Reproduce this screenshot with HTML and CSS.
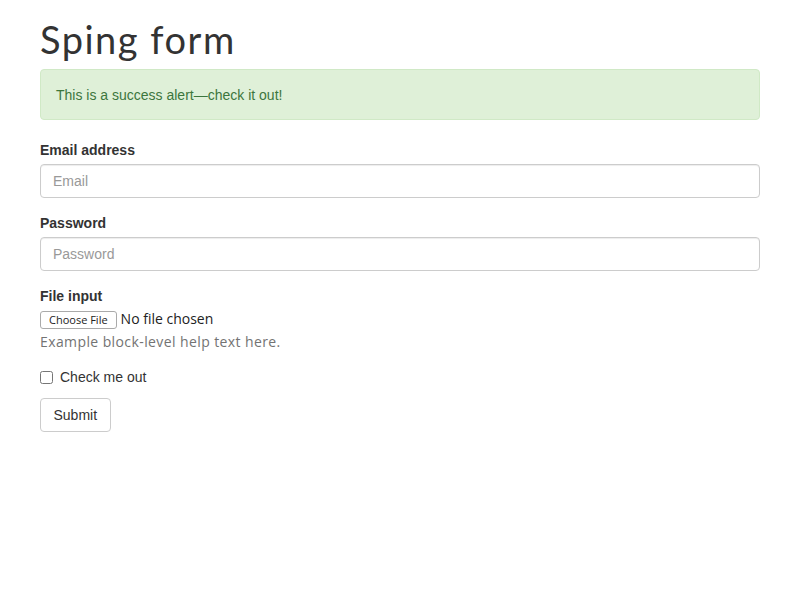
FILE: index.html
```html
<!DOCTYPE html>
<html lang="en">
<head>
<meta charset="utf-8">
<title>Sping form</title>
<link rel="stylesheet" href="styles.css">
</head>
<body>
<div class="container">
  <h1 class="title">Sping form</h1>
  <div class="alert">This is a success alert—check it out!</div>
  <form class="form">
    <div class="group">
      <label class="label" for="email">Email address</label>
      <input class="control" id="email" type="email" placeholder="Email">
    </div>
    <div class="group">
      <label class="label" for="pw">Password</label>
      <input class="control" id="pw" type="password" placeholder="Password">
    </div>
    <div class="group">
      <label class="label" for="file">File input</label>
      <input class="file" id="file" type="file">
      <p class="help">Example block-level help text here.</p>
    </div>
    <label class="check"><input class="box" type="checkbox"> Check me out</label>
    <button class="btn" type="button">Submit</button>
  </form>
</div>
</body>
</html>
```
FILE: styles.css
```css
* { box-sizing: border-box; }
body {
  margin: 0;
  font-family: "Liberation Sans", Arial, sans-serif;
  font-size: 14px;
  color: #333;
  background: #fff;
}
.container {
  width: 720px;
  margin: 0 auto;
}
.title {
  font-family: Lato, "Open Sans", sans-serif;
  font-weight: 400;
  font-size: 38px;
  letter-spacing: 1.5px;
  line-height: 40px;
  margin: 19px 0 10px;
  color: #333;
}
.alert {
  background: #dff0d8;
  border: 1px solid #d0e9c6;
  border-radius: 4px;
  color: #3c763d;
  padding: 15px;
  line-height: 20px;
  height: 51px;
  margin-bottom: 20px;
}
.form { display: flex; flex-direction: column; }
.group {
  display: flex;
  flex-direction: column;
  margin-bottom: 15px;
}
.label {
  font-weight: 700;
  line-height: 20px;
  margin-bottom: 4px;
}
.control {
  height: 34px;
  width: 100%;
  padding: 6px 12px;
  border: 1px solid #ccc;
  border-radius: 4px;
  font-family: "Liberation Sans", Arial, sans-serif;
  font-size: 14px;
  color: #555;
  box-shadow: inset 0 1px 1px rgba(0,0,0,.075);
}
.control::placeholder { color: #999; }
.file {
  font-family: "Open Sans", sans-serif;
  font-size: 14px;
  color: #222;
  height: 20px;
  padding: 0;
  margin: -1px 0 1px;
}
.file::file-selector-button {
  font-family: "Open Sans", sans-serif;
  font-size: 11px;
  height: 18px;
  padding: 0 8px;
  margin-right: 4px;
  background: #fff;
  border: 1px solid #aaa;
  border-radius: 3px;
  color: #222;
}
.help {
  font-family: "Open Sans", sans-serif;
  color: #737373;
  font-size: 14px;
  letter-spacing: 0.4px;
  line-height: 20px;
  margin: 2px 0 0;
}
.check {
  display: flex;
  align-items: center;
  gap: 7px;
  line-height: 20px;
  margin: 0 0 11px;
  font-size: 14px;
}
.box {
  width: 13px;
  height: 13px;
  margin: 0;
}
.btn {
  align-self: flex-start;
  height: 34px;
  padding: 6px 12.5px;
  border: 1px solid #ccc;
  border-radius: 4px;
  background: #fff;
  color: #333;
  font-family: "Liberation Sans", Arial, sans-serif;
  font-size: 14px;
}
```
